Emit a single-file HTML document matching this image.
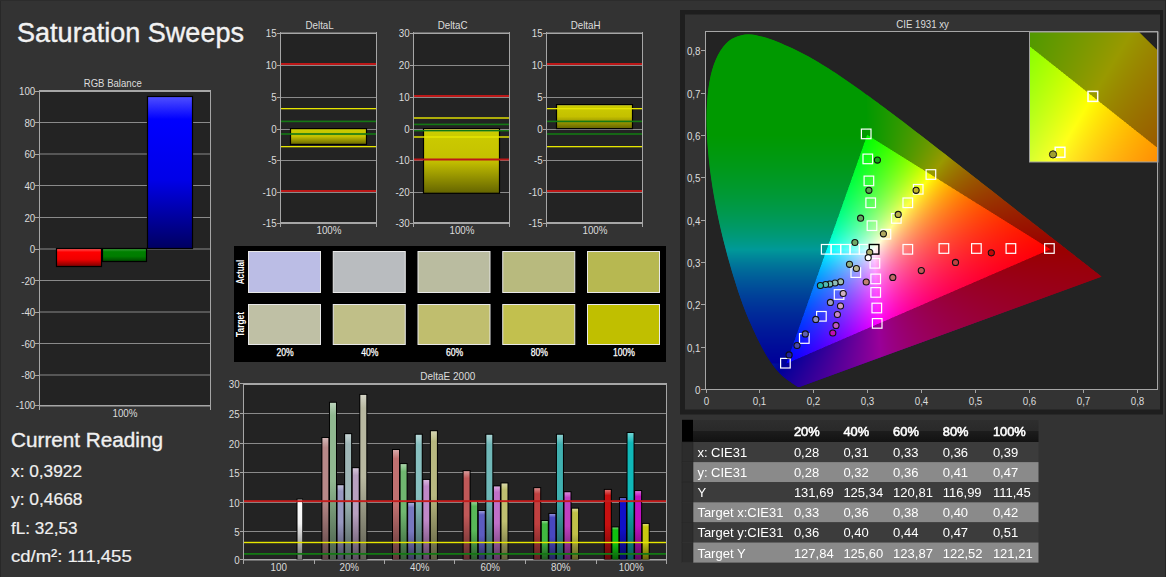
<!DOCTYPE html>
<html><head><meta charset="utf-8"><style>
html,body{margin:0;padding:0;background:#333;overflow:hidden}
#wrap{position:relative;width:1166px;height:577px;overflow:hidden}
svg{position:absolute;left:0;top:0;font-family:"Liberation Sans", sans-serif}
canvas{position:absolute;left:0;top:0}
</style></head><body><div id="wrap">
<svg width="1166" height="577" viewBox="0 0 1166 577"><defs><linearGradient id="gR" x1="0" y1="0" x2="0" y2="1"><stop offset="0" stop-color="#ff6060"/><stop offset="0.2" stop-color="#ff0000"/><stop offset="0.6" stop-color="#f00000"/><stop offset="1" stop-color="#7a0000"/></linearGradient><linearGradient id="gG" x1="0" y1="0" x2="0" y2="1"><stop offset="0" stop-color="#40a040"/><stop offset="0.25" stop-color="#008000"/><stop offset="0.6" stop-color="#007c00"/><stop offset="1" stop-color="#004400"/></linearGradient><linearGradient id="gB" x1="0" y1="0" x2="0" y2="1"><stop offset="0" stop-color="#5050ff"/><stop offset="0.15" stop-color="#0000ff"/><stop offset="0.55" stop-color="#0000e8"/><stop offset="1" stop-color="#000060"/></linearGradient><linearGradient id="gY" x1="0" y1="0" x2="0" y2="1"><stop offset="0" stop-color="#dede60"/><stop offset="0.06" stop-color="#cccc00"/><stop offset="0.5" stop-color="#c4c000"/><stop offset="1" stop-color="#646400"/></linearGradient><linearGradient id="gE00" x1="0" y1="0" x2="0" y2="1"><stop offset="0" stop-color="#d4b7b7"/><stop offset="0.08" stop-color="#b88888"/><stop offset="0.5" stop-color="#b88888"/><stop offset="1" stop-color="#5c4444"/></linearGradient><linearGradient id="gE01" x1="0" y1="0" x2="0" y2="1"><stop offset="0" stop-color="#bcd4bc"/><stop offset="0.08" stop-color="#90b890"/><stop offset="0.5" stop-color="#90b890"/><stop offset="1" stop-color="#485c48"/></linearGradient><linearGradient id="gE02" x1="0" y1="0" x2="0" y2="1"><stop offset="0" stop-color="#c1c1d9"/><stop offset="0.08" stop-color="#9898c0"/><stop offset="0.5" stop-color="#9898c0"/><stop offset="1" stop-color="#4c4c60"/></linearGradient><linearGradient id="gE03" x1="0" y1="0" x2="0" y2="1"><stop offset="0" stop-color="#c6d4d4"/><stop offset="0.08" stop-color="#a0b8b8"/><stop offset="0.5" stop-color="#a0b8b8"/><stop offset="1" stop-color="#505c5c"/></linearGradient><linearGradient id="gE04" x1="0" y1="0" x2="0" y2="1"><stop offset="0" stop-color="#d4c6d9"/><stop offset="0.08" stop-color="#b8a0c0"/><stop offset="0.5" stop-color="#b8a0c0"/><stop offset="1" stop-color="#5c5060"/></linearGradient><linearGradient id="gE05" x1="0" y1="0" x2="0" y2="1"><stop offset="0" stop-color="#d4d4c6"/><stop offset="0.08" stop-color="#b8b8a0"/><stop offset="0.5" stop-color="#b8b8a0"/><stop offset="1" stop-color="#5c5c50"/></linearGradient><linearGradient id="gE10" x1="0" y1="0" x2="0" y2="1"><stop offset="0" stop-color="#d9a9a9"/><stop offset="0.08" stop-color="#c07070"/><stop offset="0.5" stop-color="#c07070"/><stop offset="1" stop-color="#603838"/></linearGradient><linearGradient id="gE11" x1="0" y1="0" x2="0" y2="1"><stop offset="0" stop-color="#a9d4a9"/><stop offset="0.08" stop-color="#70b870"/><stop offset="0.5" stop-color="#70b870"/><stop offset="1" stop-color="#385c38"/></linearGradient><linearGradient id="gE12" x1="0" y1="0" x2="0" y2="1"><stop offset="0" stop-color="#aeaed9"/><stop offset="0.08" stop-color="#7878c0"/><stop offset="0.5" stop-color="#7878c0"/><stop offset="1" stop-color="#3c3c60"/></linearGradient><linearGradient id="gE13" x1="0" y1="0" x2="0" y2="1"><stop offset="0" stop-color="#b7d9d9"/><stop offset="0.08" stop-color="#88c0c0"/><stop offset="0.5" stop-color="#88c0c0"/><stop offset="1" stop-color="#446060"/></linearGradient><linearGradient id="gE14" x1="0" y1="0" x2="0" y2="1"><stop offset="0" stop-color="#d9b7de"/><stop offset="0.08" stop-color="#c088c8"/><stop offset="0.5" stop-color="#c088c8"/><stop offset="1" stop-color="#604464"/></linearGradient><linearGradient id="gE15" x1="0" y1="0" x2="0" y2="1"><stop offset="0" stop-color="#d4d4b2"/><stop offset="0.08" stop-color="#b8b880"/><stop offset="0.5" stop-color="#b8b880"/><stop offset="1" stop-color="#5c5c40"/></linearGradient><linearGradient id="gE20" x1="0" y1="0" x2="0" y2="1"><stop offset="0" stop-color="#d99a9a"/><stop offset="0.08" stop-color="#c05858"/><stop offset="0.5" stop-color="#c05858"/><stop offset="1" stop-color="#602c2c"/></linearGradient><linearGradient id="gE21" x1="0" y1="0" x2="0" y2="1"><stop offset="0" stop-color="#9ad49a"/><stop offset="0.08" stop-color="#58b858"/><stop offset="0.5" stop-color="#58b858"/><stop offset="1" stop-color="#2c5c2c"/></linearGradient><linearGradient id="gE22" x1="0" y1="0" x2="0" y2="1"><stop offset="0" stop-color="#9d9dd9"/><stop offset="0.08" stop-color="#5c5cc0"/><stop offset="0.5" stop-color="#5c5cc0"/><stop offset="1" stop-color="#2e2e60"/></linearGradient><linearGradient id="gE23" x1="0" y1="0" x2="0" y2="1"><stop offset="0" stop-color="#a9d4d4"/><stop offset="0.08" stop-color="#70b8b8"/><stop offset="0.5" stop-color="#70b8b8"/><stop offset="1" stop-color="#385c5c"/></linearGradient><linearGradient id="gE24" x1="0" y1="0" x2="0" y2="1"><stop offset="0" stop-color="#d9a9de"/><stop offset="0.08" stop-color="#c070c8"/><stop offset="0.5" stop-color="#c070c8"/><stop offset="1" stop-color="#603864"/></linearGradient><linearGradient id="gE25" x1="0" y1="0" x2="0" y2="1"><stop offset="0" stop-color="#d9d9a9"/><stop offset="0.08" stop-color="#c0c070"/><stop offset="0.5" stop-color="#c0c070"/><stop offset="1" stop-color="#606038"/></linearGradient><linearGradient id="gE30" x1="0" y1="0" x2="0" y2="1"><stop offset="0" stop-color="#d98c8c"/><stop offset="0.08" stop-color="#c04040"/><stop offset="0.5" stop-color="#c04040"/><stop offset="1" stop-color="#602020"/></linearGradient><linearGradient id="gE31" x1="0" y1="0" x2="0" y2="1"><stop offset="0" stop-color="#8cd48c"/><stop offset="0.08" stop-color="#40b840"/><stop offset="0.5" stop-color="#40b840"/><stop offset="1" stop-color="#205c20"/></linearGradient><linearGradient id="gE32" x1="0" y1="0" x2="0" y2="1"><stop offset="0" stop-color="#9191d9"/><stop offset="0.08" stop-color="#4848c0"/><stop offset="0.5" stop-color="#4848c0"/><stop offset="1" stop-color="#242460"/></linearGradient><linearGradient id="gE33" x1="0" y1="0" x2="0" y2="1"><stop offset="0" stop-color="#8ccfcf"/><stop offset="0.08" stop-color="#40b0b0"/><stop offset="0.5" stop-color="#40b0b0"/><stop offset="1" stop-color="#205858"/></linearGradient><linearGradient id="gE34" x1="0" y1="0" x2="0" y2="1"><stop offset="0" stop-color="#d98cd9"/><stop offset="0.08" stop-color="#c040c0"/><stop offset="0.5" stop-color="#c040c0"/><stop offset="1" stop-color="#602060"/></linearGradient><linearGradient id="gE35" x1="0" y1="0" x2="0" y2="1"><stop offset="0" stop-color="#d9d991"/><stop offset="0.08" stop-color="#c0c048"/><stop offset="0.5" stop-color="#c0c048"/><stop offset="1" stop-color="#606024"/></linearGradient><linearGradient id="gE40" x1="0" y1="0" x2="0" y2="1"><stop offset="0" stop-color="#de6f6f"/><stop offset="0.08" stop-color="#c81010"/><stop offset="0.5" stop-color="#c81010"/><stop offset="1" stop-color="#640808"/></linearGradient><linearGradient id="gE41" x1="0" y1="0" x2="0" y2="1"><stop offset="0" stop-color="#6fd96f"/><stop offset="0.08" stop-color="#10c010"/><stop offset="0.5" stop-color="#10c010"/><stop offset="1" stop-color="#086008"/></linearGradient><linearGradient id="gE42" x1="0" y1="0" x2="0" y2="1"><stop offset="0" stop-color="#6f6fde"/><stop offset="0.08" stop-color="#1010c8"/><stop offset="0.5" stop-color="#1010c8"/><stop offset="1" stop-color="#080864"/></linearGradient><linearGradient id="gE43" x1="0" y1="0" x2="0" y2="1"><stop offset="0" stop-color="#6fd4d4"/><stop offset="0.08" stop-color="#10b8b8"/><stop offset="0.5" stop-color="#10b8b8"/><stop offset="1" stop-color="#085c5c"/></linearGradient><linearGradient id="gE44" x1="0" y1="0" x2="0" y2="1"><stop offset="0" stop-color="#d96fd9"/><stop offset="0.08" stop-color="#c010c0"/><stop offset="0.5" stop-color="#c010c0"/><stop offset="1" stop-color="#600860"/></linearGradient><linearGradient id="gE45" x1="0" y1="0" x2="0" y2="1"><stop offset="0" stop-color="#dede6f"/><stop offset="0.08" stop-color="#c8c810"/><stop offset="0.5" stop-color="#c8c810"/><stop offset="1" stop-color="#646408"/></linearGradient><linearGradient id="gEw" x1="0" y1="0" x2="0" y2="1"><stop offset="0" stop-color="#ffffff"/><stop offset="0.4" stop-color="#f4f4f4"/><stop offset="1" stop-color="#707070"/></linearGradient><linearGradient id="gTong" gradientUnits="userSpaceOnUse" x1="0" y1="134.9" x2="0" y2="363.6"><stop offset="0" stop-color="#009400"/><stop offset="0.35" stop-color="#009440"/><stop offset="0.5" stop-color="#009490"/><stop offset="0.7" stop-color="#004a94"/><stop offset="1" stop-color="#0000a0"/></linearGradient><linearGradient id="gOutR" gradientUnits="userSpaceOnUse" x1="867.2" y1="134.9" x2="1050.5" y2="249.2"><stop offset="0" stop-color="#009400"/><stop offset="0.35" stop-color="#7a8a00"/><stop offset="0.65" stop-color="#8a4000"/><stop offset="1" stop-color="#940000"/></linearGradient><linearGradient id="gOutB" gradientUnits="userSpaceOnUse" x1="786.4" y1="363.6" x2="1050.5" y2="249.2"><stop offset="0" stop-color="#1000a0"/><stop offset="0.45" stop-color="#7a0090"/><stop offset="1" stop-color="#940000"/></linearGradient><clipPath id="cpT"><polygon points="799.3,386.9 799.3,386.9 799.3,386.9 799.3,386.9 799.3,386.9 799.3,386.9 799.3,386.9 799.3,386.9 799.3,386.9 799.2,386.9 799.2,386.9 799.2,386.9 799.2,386.9 799.2,386.9 799.1,386.9 799.1,386.9 799.1,386.9 799.1,386.9 799.1,386.9 799.0,386.9 799.0,386.9 799.0,386.9 799.0,387.0 798.9,387.0 798.9,387.0 798.9,387.0 798.9,387.0 798.8,387.0 798.8,387.0 798.8,387.0 798.7,387.0 798.7,387.0 798.7,387.0 798.6,387.0 798.6,387.0 798.6,387.0 798.5,387.0 798.5,387.0 798.4,387.0 798.4,387.0 798.4,387.0 798.3,387.0 798.3,387.0 798.2,387.0 798.2,386.9 798.1,386.9 798.0,386.9 798.0,386.9 797.9,386.8 797.8,386.8 797.7,386.8 797.6,386.7 797.5,386.7 797.4,386.6 797.3,386.5 797.2,386.5 797.1,386.4 796.9,386.3 796.8,386.3 796.7,386.2 796.5,386.1 796.4,386.0 796.2,385.9 796.0,385.7 795.9,385.6 795.7,385.5 795.5,385.4 795.3,385.2 795.0,385.1 794.8,384.9 794.6,384.7 794.4,384.6 794.1,384.4 793.8,384.2 793.6,384.0 793.3,383.8 793.0,383.6 792.7,383.4 792.3,383.2 792.0,382.9 791.6,382.7 791.2,382.4 790.8,382.1 790.4,381.8 789.9,381.5 789.4,381.2 789.0,380.9 788.5,380.5 788.0,380.2 787.4,379.8 786.9,379.4 786.3,379.0 785.7,378.5 785.1,378.0 784.5,377.5 783.8,377.0 783.1,376.4 782.4,375.8 781.7,375.2 781.0,374.6 780.2,373.8 779.4,373.0 778.5,372.1 777.6,371.1 776.7,370.0 775.7,368.8 774.6,367.5 773.5,366.1 772.4,364.5 771.2,362.8 770.0,361.0 768.7,359.1 767.4,357.0 766.0,354.8 764.6,352.2 763.1,349.5 761.5,346.6 759.9,343.6 758.2,340.2 756.5,336.7 754.7,332.8 752.8,328.7 750.8,324.3 748.8,319.7 746.7,314.8 744.6,309.6 742.5,304.0 740.4,298.1 738.3,291.9 736.2,285.4 734.1,278.5 731.9,271.4 729.8,264.1 727.6,256.4 725.5,248.3 723.3,239.9 721.3,231.4 719.3,222.7 717.4,214.0 715.7,205.3 714.0,196.3 712.5,187.2 711.1,178.1 709.9,169.2 708.9,160.5 708.1,151.9 707.4,143.3 706.9,134.9 706.6,126.6 706.5,118.6 706.6,110.9 707.0,103.4 707.5,96.1 708.3,89.1 709.3,82.4 710.6,76.1 712.0,70.2 713.7,64.8 715.7,59.8 717.9,55.1 720.3,50.9 722.9,47.1 725.6,43.9 728.4,41.2 731.5,39.1 734.7,37.4 738.0,36.1 741.4,35.2 744.8,34.6 748.2,34.4 751.8,34.6 755.4,35.1 759.1,35.9 762.8,36.8 766.4,37.8 770.1,38.9 773.8,40.3 777.4,41.7 781.1,43.3 784.8,44.9 788.4,46.5 791.9,48.1 795.4,49.8 798.9,51.5 802.3,53.2 805.7,55.0 809.1,56.8 812.5,58.7 815.8,60.6 819.1,62.6 822.5,64.7 825.8,66.7 829.1,68.8 832.4,70.9 835.7,73.1 838.9,75.2 842.2,77.4 845.5,79.7 848.7,81.9 852.0,84.2 855.2,86.5 858.4,88.8 861.6,91.1 864.8,93.5 868.1,95.8 871.3,98.1 874.5,100.5 877.7,102.8 880.9,105.2 884.1,107.6 887.3,110.0 890.5,112.4 893.7,114.8 897.0,117.2 900.2,119.6 903.4,122.1 906.6,124.5 909.8,127.0 913.0,129.4 916.2,131.9 919.4,134.4 922.6,136.8 925.8,139.3 929.0,141.8 932.2,144.2 935.4,146.7 938.5,149.2 941.7,151.6 944.9,154.1 948.0,156.5 951.2,159.0 954.3,161.4 957.4,163.9 960.5,166.3 963.6,168.7 966.6,171.1 969.7,173.5 972.7,175.9 975.8,178.2 978.8,180.6 981.7,182.9 984.7,185.2 987.6,187.5 990.6,189.8 993.4,192.1 996.3,194.3 999.1,196.6 1002.0,198.8 1004.7,200.9 1007.5,203.1 1010.2,205.2 1012.9,207.3 1015.5,209.4 1018.1,211.4 1020.7,213.4 1023.2,215.4 1025.7,217.3 1028.1,219.2 1030.5,221.1 1032.8,222.9 1035.0,224.6 1037.2,226.3 1039.3,228.0 1041.4,229.6 1043.5,231.2 1045.5,232.8 1047.4,234.4 1049.4,235.9 1051.3,237.4 1053.1,238.8 1054.9,240.2 1056.6,241.5 1058.3,242.8 1059.9,244.0 1061.4,245.2 1062.9,246.4 1064.4,247.6 1065.8,248.7 1067.1,249.7 1068.4,250.7 1069.7,251.7 1070.9,252.7 1072.1,253.6 1073.2,254.5 1074.3,255.3 1075.3,256.2 1076.3,256.9 1077.3,257.7 1078.2,258.4 1079.1,259.1 1080.0,259.8 1080.8,260.4 1081.6,261.1 1082.4,261.7 1083.1,262.2 1083.8,262.8 1084.5,263.3 1085.2,263.9 1085.8,264.4 1086.5,264.9 1087.1,265.3 1087.7,265.8 1088.2,266.3 1088.8,266.7 1089.3,267.1 1089.8,267.5 1090.3,267.9 1090.8,268.3 1091.3,268.7 1091.8,269.0 1092.2,269.4 1092.6,269.7 1093.0,270.0 1093.4,270.3 1093.8,270.6 1094.2,270.9 1094.5,271.2 1094.9,271.4 1095.2,271.7 1095.5,271.9 1095.8,272.2 1096.1,272.4 1096.3,272.6 1096.6,272.8 1096.8,273.0 1097.0,273.1 1097.3,273.3 1097.5,273.5 1097.7,273.6 1097.9,273.8 1098.1,273.9 1098.2,274.1 1098.4,274.2 1098.6,274.3 1098.7,274.4 1098.8,274.6 1099.0,274.7 1099.1,274.7 1099.2,274.8 1099.3,274.9 1099.4,275.0 1099.5,275.1 1099.6,275.1 1099.6,275.2 1099.7,275.2 1099.8,275.3 1099.9,275.4 1100.0,275.4 1100.0,275.5 1100.2,275.6 1100.3,275.7 1100.4,275.8 1100.5,275.9 1100.7,276.0 1100.8,276.1 1100.9,276.2 1101.1,276.3 1101.2,276.4 1101.3,276.5 1101.4,276.6 1101.5,276.6"/></clipPath><radialGradient id="gW" gradientUnits="userSpaceOnUse" cx="874.0" cy="249.7" r="70"><stop offset="0" stop-color="#ffffff"/><stop offset="0.4" stop-color="#ffffff" stop-opacity="0.5"/><stop offset="1" stop-color="#ffffff" stop-opacity="0"/></radialGradient><linearGradient id="gV0" gradientUnits="userSpaceOnUse" x1="1050.5" y1="249.2" x2="826.8" y2="249.2"><stop offset="0" stop-color="#ff0000"/><stop offset="0.55" stop-color="#ff0000"/><stop offset="1" stop-color="#000"/></linearGradient><linearGradient id="gV1" gradientUnits="userSpaceOnUse" x1="867.2" y1="134.9" x2="918.4" y2="306.4"><stop offset="0" stop-color="#00ff00"/><stop offset="0.55" stop-color="#00ff00"/><stop offset="1" stop-color="#000"/></linearGradient><linearGradient id="gV2" gradientUnits="userSpaceOnUse" x1="786.4" y1="363.6" x2="958.8" y2="192.1"><stop offset="0" stop-color="#0000ff"/><stop offset="0.55" stop-color="#0000ff"/><stop offset="1" stop-color="#000"/></linearGradient><linearGradient id="gIn1" x1="0" y1="0" x2="1" y2="1"><stop offset="0" stop-color="#80ff00"/><stop offset="0.5" stop-color="#ffff00"/><stop offset="1" stop-color="#ff9000"/></linearGradient><linearGradient id="gIn2" x1="0" y1="0" x2="1" y2="1"><stop offset="0" stop-color="#488c00"/><stop offset="0.5" stop-color="#8a8a00"/><stop offset="1" stop-color="#8a5000"/></linearGradient><linearGradient id="gHdr" x1="0" y1="0" x2="0" y2="1"><stop offset="0" stop-color="#2e2e2e"/><stop offset="0.5" stop-color="#292929"/><stop offset="0.52" stop-color="#1c1c1c"/><stop offset="1" stop-color="#121212"/></linearGradient></defs>
<rect x="0" y="0" width="1166" height="577" fill="#333333"/>
<rect x="0" y="0" width="1" height="577" fill="#282828"/>
<rect x="0" y="0" width="1166" height="1" fill="#2c2c2c"/>
<rect x="1165" y="0" width="1" height="577" fill="#262626"/>
<text x="17" y="41.6" font-size="27" text-anchor="start" fill="#f2f2f2" font-weight="normal" stroke="#f2f2f2" stroke-width="0.4" textLength="227" lengthAdjust="spacingAndGlyphs">Saturation Sweeps</text>
<rect x="40" y="91" width="170" height="315" fill="#232323"/>
<rect x="40" y="90" width="171" height="2" fill="#a6a6a6"/>
<rect x="35" y="91" width="4" height="1" fill="#a6a6a6"/>
<text x="35.3" y="95" font-size="11" text-anchor="end" fill="#dcdcdc" font-weight="normal"  textLength="16.33" lengthAdjust="spacingAndGlyphs">100</text>
<rect x="40" y="122" width="170" height="1" fill="#8a8a8a"/>
<rect x="35" y="122" width="4" height="1" fill="#a6a6a6"/>
<text x="35.3" y="126.5" font-size="11" text-anchor="end" fill="#dcdcdc" font-weight="normal"  textLength="10.89" lengthAdjust="spacingAndGlyphs">80</text>
<rect x="40" y="153.5" width="170" height="1" fill="#8a8a8a"/>
<rect x="35" y="154" width="4" height="1" fill="#a6a6a6"/>
<text x="35.3" y="158" font-size="11" text-anchor="end" fill="#dcdcdc" font-weight="normal"  textLength="10.89" lengthAdjust="spacingAndGlyphs">60</text>
<rect x="40" y="185" width="170" height="1" fill="#8a8a8a"/>
<rect x="35" y="185" width="4" height="1" fill="#a6a6a6"/>
<text x="35.3" y="189.5" font-size="11" text-anchor="end" fill="#dcdcdc" font-weight="normal"  textLength="10.89" lengthAdjust="spacingAndGlyphs">40</text>
<rect x="40" y="217" width="170" height="1" fill="#8a8a8a"/>
<rect x="35" y="217" width="4" height="1" fill="#a6a6a6"/>
<text x="35.3" y="221.5" font-size="11" text-anchor="end" fill="#dcdcdc" font-weight="normal"  textLength="10.89" lengthAdjust="spacingAndGlyphs">20</text>
<rect x="40" y="248.5" width="170" height="1" fill="#8a8a8a"/>
<rect x="35" y="249" width="4" height="1" fill="#a6a6a6"/>
<text x="35.3" y="253" font-size="11" text-anchor="end" fill="#dcdcdc" font-weight="normal"  textLength="5.44" lengthAdjust="spacingAndGlyphs">0</text>
<rect x="40" y="280" width="170" height="1" fill="#8a8a8a"/>
<rect x="35" y="280" width="4" height="1" fill="#a6a6a6"/>
<text x="35.3" y="284.5" font-size="11" text-anchor="end" fill="#dcdcdc" font-weight="normal"  textLength="14.15" lengthAdjust="spacingAndGlyphs">-20</text>
<rect x="40" y="311.5" width="170" height="1" fill="#8a8a8a"/>
<rect x="35" y="312" width="4" height="1" fill="#a6a6a6"/>
<text x="35.3" y="316" font-size="11" text-anchor="end" fill="#dcdcdc" font-weight="normal"  textLength="14.15" lengthAdjust="spacingAndGlyphs">-40</text>
<rect x="40" y="343" width="170" height="1" fill="#8a8a8a"/>
<rect x="35" y="343" width="4" height="1" fill="#a6a6a6"/>
<text x="35.3" y="347.5" font-size="11" text-anchor="end" fill="#dcdcdc" font-weight="normal"  textLength="14.15" lengthAdjust="spacingAndGlyphs">-60</text>
<rect x="40" y="374.5" width="170" height="1" fill="#8a8a8a"/>
<rect x="35" y="375" width="4" height="1" fill="#a6a6a6"/>
<text x="35.3" y="379" font-size="11" text-anchor="end" fill="#dcdcdc" font-weight="normal"  textLength="14.15" lengthAdjust="spacingAndGlyphs">-80</text>
<rect x="39" y="405" width="172" height="1.5" fill="#a6a6a6"/>
<rect x="35" y="405" width="4" height="1" fill="#a6a6a6"/>
<text x="35.3" y="409" font-size="11" text-anchor="end" fill="#dcdcdc" font-weight="normal"  textLength="19.60" lengthAdjust="spacingAndGlyphs">-100</text>
<rect x="39" y="90" width="1" height="320" fill="#a6a6a6"/>
<rect x="210" y="90" width="1" height="320" fill="#a6a6a6"/>
<text x="112.75" y="87" font-size="11" text-anchor="middle" fill="#dcdcdc" font-weight="normal"  textLength="58.00" lengthAdjust="spacingAndGlyphs">RGB Balance</text>
<text x="125" y="417" font-size="11" text-anchor="middle" fill="#dcdcdc" font-weight="normal"  textLength="25.04" lengthAdjust="spacingAndGlyphs">100%</text>
<rect x="56.5" y="248.5" width="45" height="18" fill="url(#gR)" stroke="#000" stroke-width="1.2"/>
<rect x="102.5" y="248.5" width="44" height="13" fill="url(#gG)" stroke="#000" stroke-width="1.2"/>
<rect x="147.5" y="96.5" width="45" height="152" fill="url(#gB)" stroke="#000" stroke-width="1.2"/>
<rect x="281" y="33" width="95" height="190" fill="#232323"/>
<rect x="280" y="32.5" width="97" height="1.5" fill="#a6a6a6"/>
<rect x="277" y="33" width="3" height="1" fill="#a6a6a6"/>
<text x="276.7" y="36.8" font-size="11" text-anchor="end" fill="#dcdcdc" font-weight="normal"  textLength="10.89" lengthAdjust="spacingAndGlyphs">15</text>
<rect x="281" y="65" width="95" height="1" fill="#8a8a8a"/>
<rect x="277" y="65" width="3" height="1" fill="#a6a6a6"/>
<text x="276.7" y="68.8" font-size="11" text-anchor="end" fill="#dcdcdc" font-weight="normal"  textLength="10.89" lengthAdjust="spacingAndGlyphs">10</text>
<rect x="281" y="97" width="95" height="1" fill="#8a8a8a"/>
<rect x="277" y="97" width="3" height="1" fill="#a6a6a6"/>
<text x="276.7" y="100.8" font-size="11" text-anchor="end" fill="#dcdcdc" font-weight="normal"  textLength="5.44" lengthAdjust="spacingAndGlyphs">5</text>
<rect x="281" y="129" width="95" height="1" fill="#8a8a8a"/>
<rect x="277" y="129" width="3" height="1" fill="#a6a6a6"/>
<text x="276.7" y="132.8" font-size="11" text-anchor="end" fill="#dcdcdc" font-weight="normal"  textLength="5.44" lengthAdjust="spacingAndGlyphs">0</text>
<rect x="281" y="160" width="95" height="1" fill="#8a8a8a"/>
<rect x="277" y="160" width="3" height="1" fill="#a6a6a6"/>
<text x="276.7" y="163.8" font-size="11" text-anchor="end" fill="#dcdcdc" font-weight="normal"  textLength="8.71" lengthAdjust="spacingAndGlyphs">-5</text>
<rect x="281" y="192" width="95" height="1" fill="#8a8a8a"/>
<rect x="277" y="192" width="3" height="1" fill="#a6a6a6"/>
<text x="276.7" y="195.8" font-size="11" text-anchor="end" fill="#dcdcdc" font-weight="normal"  textLength="14.15" lengthAdjust="spacingAndGlyphs">-10</text>
<rect x="280" y="222" width="97" height="2" fill="#a6a6a6"/>
<rect x="277" y="223" width="3" height="1" fill="#a6a6a6"/>
<text x="276.7" y="226.8" font-size="11" text-anchor="end" fill="#dcdcdc" font-weight="normal"  textLength="14.15" lengthAdjust="spacingAndGlyphs">-15</text>
<rect x="280" y="32" width="1" height="195" fill="#a6a6a6"/>
<rect x="376" y="32" width="1" height="195" fill="#a6a6a6"/>
<text x="319.6" y="29" font-size="11" text-anchor="middle" fill="#dcdcdc" font-weight="normal"  textLength="28.30" lengthAdjust="spacingAndGlyphs">DeltaL</text>
<text x="329" y="233.7" font-size="11" text-anchor="middle" fill="#dcdcdc" font-weight="normal"  textLength="25.04" lengthAdjust="spacingAndGlyphs">100%</text>
<rect x="290.5" y="128.6" width="76" height="15.8" fill="url(#gY)" stroke="#000" stroke-width="1.2"/>
<rect x="281" y="63" width="95" height="2" fill="#bc1818"/>
<rect x="281" y="190" width="95" height="2" fill="#bc1818"/>
<rect x="281" y="108" width="95" height="1.3" fill="#e6e600"/>
<rect x="281" y="146" width="95" height="1.3" fill="#e6e600"/>
<rect x="281" y="120.6" width="95" height="1.6" fill="#147814"/>
<rect x="281" y="133.2" width="95" height="1.6" fill="#147814"/>
<rect x="414" y="33" width="95" height="190" fill="#232323"/>
<rect x="413" y="32.5" width="97" height="1.5" fill="#a6a6a6"/>
<rect x="410" y="33" width="3" height="1" fill="#a6a6a6"/>
<text x="409.7" y="36.8" font-size="11" text-anchor="end" fill="#dcdcdc" font-weight="normal"  textLength="10.89" lengthAdjust="spacingAndGlyphs">30</text>
<rect x="414" y="65" width="95" height="1" fill="#8a8a8a"/>
<rect x="410" y="65" width="3" height="1" fill="#a6a6a6"/>
<text x="409.7" y="68.8" font-size="11" text-anchor="end" fill="#dcdcdc" font-weight="normal"  textLength="10.89" lengthAdjust="spacingAndGlyphs">20</text>
<rect x="414" y="97" width="95" height="1" fill="#8a8a8a"/>
<rect x="410" y="97" width="3" height="1" fill="#a6a6a6"/>
<text x="409.7" y="100.8" font-size="11" text-anchor="end" fill="#dcdcdc" font-weight="normal"  textLength="10.89" lengthAdjust="spacingAndGlyphs">10</text>
<rect x="414" y="129" width="95" height="1" fill="#8a8a8a"/>
<rect x="410" y="129" width="3" height="1" fill="#a6a6a6"/>
<text x="409.7" y="132.8" font-size="11" text-anchor="end" fill="#dcdcdc" font-weight="normal"  textLength="5.44" lengthAdjust="spacingAndGlyphs">0</text>
<rect x="414" y="160" width="95" height="1" fill="#8a8a8a"/>
<rect x="410" y="160" width="3" height="1" fill="#a6a6a6"/>
<text x="409.7" y="163.8" font-size="11" text-anchor="end" fill="#dcdcdc" font-weight="normal"  textLength="14.15" lengthAdjust="spacingAndGlyphs">-10</text>
<rect x="414" y="192" width="95" height="1" fill="#8a8a8a"/>
<rect x="410" y="192" width="3" height="1" fill="#a6a6a6"/>
<text x="409.7" y="195.8" font-size="11" text-anchor="end" fill="#dcdcdc" font-weight="normal"  textLength="14.15" lengthAdjust="spacingAndGlyphs">-20</text>
<rect x="413" y="222" width="97" height="2" fill="#a6a6a6"/>
<rect x="410" y="223" width="3" height="1" fill="#a6a6a6"/>
<text x="409.7" y="226.8" font-size="11" text-anchor="end" fill="#dcdcdc" font-weight="normal"  textLength="14.15" lengthAdjust="spacingAndGlyphs">-30</text>
<rect x="413" y="32" width="1" height="195" fill="#a6a6a6"/>
<rect x="509" y="32" width="1" height="195" fill="#a6a6a6"/>
<text x="452.6" y="29" font-size="11" text-anchor="middle" fill="#dcdcdc" font-weight="normal"  textLength="29.93" lengthAdjust="spacingAndGlyphs">DeltaC</text>
<text x="462" y="233.7" font-size="11" text-anchor="middle" fill="#dcdcdc" font-weight="normal"  textLength="25.04" lengthAdjust="spacingAndGlyphs">100%</text>
<rect x="423.5" y="128.6" width="76" height="64.7" fill="url(#gY)" stroke="#000" stroke-width="1.2"/>
<rect x="414" y="95" width="95" height="2" fill="#bc1818"/>
<rect x="414" y="158.5" width="95" height="2" fill="#bc1818"/>
<rect x="414" y="117" width="95" height="2" fill="rgba(232,232,0,0.7)"/>
<rect x="414" y="136" width="95" height="2" fill="rgba(232,232,0,0.7)"/>
<rect x="414" y="123.6" width="95" height="1.6" fill="#147814"/>
<rect x="414" y="130" width="95" height="1.4" fill="#147814"/>
<rect x="547" y="33" width="95" height="190" fill="#232323"/>
<rect x="546" y="32.5" width="97" height="1.5" fill="#a6a6a6"/>
<rect x="543" y="33" width="3" height="1" fill="#a6a6a6"/>
<text x="542.7" y="36.8" font-size="11" text-anchor="end" fill="#dcdcdc" font-weight="normal"  textLength="10.89" lengthAdjust="spacingAndGlyphs">15</text>
<rect x="547" y="65" width="95" height="1" fill="#8a8a8a"/>
<rect x="543" y="65" width="3" height="1" fill="#a6a6a6"/>
<text x="542.7" y="68.8" font-size="11" text-anchor="end" fill="#dcdcdc" font-weight="normal"  textLength="10.89" lengthAdjust="spacingAndGlyphs">10</text>
<rect x="547" y="97" width="95" height="1" fill="#8a8a8a"/>
<rect x="543" y="97" width="3" height="1" fill="#a6a6a6"/>
<text x="542.7" y="100.8" font-size="11" text-anchor="end" fill="#dcdcdc" font-weight="normal"  textLength="5.44" lengthAdjust="spacingAndGlyphs">5</text>
<rect x="547" y="129" width="95" height="1" fill="#8a8a8a"/>
<rect x="543" y="129" width="3" height="1" fill="#a6a6a6"/>
<text x="542.7" y="132.8" font-size="11" text-anchor="end" fill="#dcdcdc" font-weight="normal"  textLength="5.44" lengthAdjust="spacingAndGlyphs">0</text>
<rect x="547" y="160" width="95" height="1" fill="#8a8a8a"/>
<rect x="543" y="160" width="3" height="1" fill="#a6a6a6"/>
<text x="542.7" y="163.8" font-size="11" text-anchor="end" fill="#dcdcdc" font-weight="normal"  textLength="8.71" lengthAdjust="spacingAndGlyphs">-5</text>
<rect x="547" y="192" width="95" height="1" fill="#8a8a8a"/>
<rect x="543" y="192" width="3" height="1" fill="#a6a6a6"/>
<text x="542.7" y="195.8" font-size="11" text-anchor="end" fill="#dcdcdc" font-weight="normal"  textLength="14.15" lengthAdjust="spacingAndGlyphs">-10</text>
<rect x="546" y="222" width="97" height="2" fill="#a6a6a6"/>
<rect x="543" y="223" width="3" height="1" fill="#a6a6a6"/>
<text x="542.7" y="226.8" font-size="11" text-anchor="end" fill="#dcdcdc" font-weight="normal"  textLength="14.15" lengthAdjust="spacingAndGlyphs">-15</text>
<rect x="546" y="32" width="1" height="195" fill="#a6a6a6"/>
<rect x="642" y="32" width="1" height="195" fill="#a6a6a6"/>
<text x="585.6" y="29" font-size="11" text-anchor="middle" fill="#dcdcdc" font-weight="normal"  textLength="29.93" lengthAdjust="spacingAndGlyphs">DeltaH</text>
<text x="595" y="233.7" font-size="11" text-anchor="middle" fill="#dcdcdc" font-weight="normal"  textLength="25.04" lengthAdjust="spacingAndGlyphs">100%</text>
<rect x="556.5" y="104.6" width="76" height="24" fill="url(#gY)" stroke="#000" stroke-width="1.2"/>
<rect x="547" y="63" width="95" height="2" fill="#bc1818"/>
<rect x="547" y="190" width="95" height="2" fill="#bc1818"/>
<rect x="547" y="108" width="95" height="1.3" fill="#e6e600"/>
<rect x="547" y="146" width="95" height="1.3" fill="#e6e600"/>
<rect x="547" y="120.6" width="95" height="1.6" fill="#147814"/>
<rect x="547" y="133.2" width="95" height="1.6" fill="#147814"/>
<rect x="234" y="246" width="432" height="116" fill="#000"/>
<rect x="248.5" y="251.5" width="72" height="41" fill="#bbbde5" stroke="#e8e8e8" stroke-width="1"/>
<rect x="248.5" y="304.5" width="72" height="40" fill="#bfc0a5" stroke="#e8e8e8" stroke-width="1"/>
<text x="285" y="356" font-size="10" text-anchor="middle" fill="#ffffff" font-weight="normal" stroke="#ffffff" stroke-width="0.25" textLength="17.21" lengthAdjust="spacingAndGlyphs">20%</text>
<rect x="333.25" y="251.5" width="72" height="41" fill="#b9bcbf" stroke="#e8e8e8" stroke-width="1"/>
<rect x="333.25" y="304.5" width="72" height="40" fill="#c0bf88" stroke="#e8e8e8" stroke-width="1"/>
<text x="369.75" y="356" font-size="10" text-anchor="middle" fill="#ffffff" font-weight="normal" stroke="#ffffff" stroke-width="0.25" textLength="17.21" lengthAdjust="spacingAndGlyphs">40%</text>
<rect x="418" y="251.5" width="72" height="41" fill="#babca0" stroke="#e8e8e8" stroke-width="1"/>
<rect x="418" y="304.5" width="72" height="40" fill="#c0be6e" stroke="#e8e8e8" stroke-width="1"/>
<text x="454.5" y="356" font-size="10" text-anchor="middle" fill="#ffffff" font-weight="normal" stroke="#ffffff" stroke-width="0.25" textLength="17.21" lengthAdjust="spacingAndGlyphs">60%</text>
<rect x="502.75" y="251.5" width="72" height="41" fill="#b8ba7e" stroke="#e8e8e8" stroke-width="1"/>
<rect x="502.75" y="304.5" width="72" height="40" fill="#c2c04e" stroke="#e8e8e8" stroke-width="1"/>
<text x="539.25" y="356" font-size="10" text-anchor="middle" fill="#ffffff" font-weight="normal" stroke="#ffffff" stroke-width="0.25" textLength="17.21" lengthAdjust="spacingAndGlyphs">80%</text>
<rect x="587.5" y="251.5" width="72" height="41" fill="#b7b851" stroke="#e8e8e8" stroke-width="1"/>
<rect x="587.5" y="304.5" width="72" height="40" fill="#c0bf00" stroke="#e8e8e8" stroke-width="1"/>
<text x="624" y="356" font-size="10" text-anchor="middle" fill="#ffffff" font-weight="normal" stroke="#ffffff" stroke-width="0.25" textLength="22.00" lengthAdjust="spacingAndGlyphs">100%</text>
<text x="0" y="0" font-size="10" font-weight="bold" fill="#fff" text-anchor="middle" textLength="24.5" lengthAdjust="spacingAndGlyphs" transform="translate(243.5 272) rotate(-90)">Actual</text>
<text x="0" y="0" font-size="10" font-weight="bold" fill="#fff" text-anchor="middle" textLength="25" lengthAdjust="spacingAndGlyphs" transform="translate(243.5 324.5) rotate(-90)">Target</text>
<rect x="244" y="384" width="422" height="176" fill="#232323"/>
<rect x="243" y="383" width="424" height="2" fill="#a6a6a6"/>
<rect x="240" y="383" width="3" height="1" fill="#a6a6a6"/>
<text x="239.7" y="387.7" font-size="11" text-anchor="end" fill="#dcdcdc" font-weight="normal"  textLength="10.89" lengthAdjust="spacingAndGlyphs">30</text>
<rect x="244" y="413" width="422" height="1" fill="#8a8a8a"/>
<rect x="240" y="413" width="3" height="1" fill="#a6a6a6"/>
<text x="239.7" y="417.7" font-size="11" text-anchor="end" fill="#dcdcdc" font-weight="normal"  textLength="10.89" lengthAdjust="spacingAndGlyphs">25</text>
<rect x="244" y="443" width="422" height="1" fill="#8a8a8a"/>
<rect x="240" y="443" width="3" height="1" fill="#a6a6a6"/>
<text x="239.7" y="447.7" font-size="11" text-anchor="end" fill="#dcdcdc" font-weight="normal"  textLength="10.89" lengthAdjust="spacingAndGlyphs">20</text>
<rect x="244" y="472" width="422" height="1" fill="#8a8a8a"/>
<rect x="240" y="472" width="3" height="1" fill="#a6a6a6"/>
<text x="239.7" y="476.7" font-size="11" text-anchor="end" fill="#dcdcdc" font-weight="normal"  textLength="10.89" lengthAdjust="spacingAndGlyphs">15</text>
<rect x="244" y="502" width="422" height="1" fill="#8a8a8a"/>
<rect x="240" y="502" width="3" height="1" fill="#a6a6a6"/>
<text x="239.7" y="506.7" font-size="11" text-anchor="end" fill="#dcdcdc" font-weight="normal"  textLength="10.89" lengthAdjust="spacingAndGlyphs">10</text>
<rect x="244" y="531" width="422" height="1" fill="#8a8a8a"/>
<rect x="240" y="531" width="3" height="1" fill="#a6a6a6"/>
<text x="239.7" y="535.7" font-size="11" text-anchor="end" fill="#dcdcdc" font-weight="normal"  textLength="5.44" lengthAdjust="spacingAndGlyphs">5</text>
<rect x="243" y="559" width="424" height="1.5" fill="#a6a6a6"/>
<rect x="240" y="559" width="3" height="1" fill="#a6a6a6"/>
<text x="239.7" y="563.7" font-size="11" text-anchor="end" fill="#dcdcdc" font-weight="normal"  textLength="5.44" lengthAdjust="spacingAndGlyphs">0</text>
<rect x="243" y="383" width="1" height="181" fill="#a6a6a6"/>
<rect x="666" y="383" width="1" height="181" fill="#a6a6a6"/>
<rect x="314" y="559" width="1" height="5" fill="#a6a6a6"/>
<rect x="384" y="559" width="1" height="5" fill="#a6a6a6"/>
<rect x="454" y="559" width="1" height="5" fill="#a6a6a6"/>
<rect x="525" y="559" width="1" height="5" fill="#a6a6a6"/>
<rect x="596" y="559" width="1" height="5" fill="#a6a6a6"/>
<text x="278.75" y="571" font-size="11" text-anchor="middle" fill="#dcdcdc" font-weight="normal"  textLength="16.33" lengthAdjust="spacingAndGlyphs">100</text>
<text x="349.25" y="571" font-size="11" text-anchor="middle" fill="#dcdcdc" font-weight="normal"  textLength="19.59" lengthAdjust="spacingAndGlyphs">20%</text>
<text x="419.75" y="571" font-size="11" text-anchor="middle" fill="#dcdcdc" font-weight="normal"  textLength="19.59" lengthAdjust="spacingAndGlyphs">40%</text>
<text x="490.25" y="571" font-size="11" text-anchor="middle" fill="#dcdcdc" font-weight="normal"  textLength="19.59" lengthAdjust="spacingAndGlyphs">60%</text>
<text x="560.75" y="571" font-size="11" text-anchor="middle" fill="#dcdcdc" font-weight="normal"  textLength="19.59" lengthAdjust="spacingAndGlyphs">80%</text>
<text x="631.25" y="571" font-size="11" text-anchor="middle" fill="#dcdcdc" font-weight="normal"  textLength="25.04" lengthAdjust="spacingAndGlyphs">100%</text>
<text x="447.8" y="379.7" font-size="11" text-anchor="middle" fill="#dcdcdc" font-weight="normal"  textLength="55.00" lengthAdjust="spacingAndGlyphs">DeltaE 2000</text>
<rect x="321.4" y="436.98" width="8" height="122.52" fill="#000"/>
<rect x="322.4" y="437.98" width="6" height="121.52" fill="url(#gE00)"/>
<rect x="328.98" y="401.78" width="8" height="157.72" fill="#000"/>
<rect x="329.98" y="402.78" width="6" height="156.72" fill="url(#gE01)"/>
<rect x="336.56" y="484.21" width="8" height="75.29" fill="#000"/>
<rect x="337.56" y="485.21" width="6" height="74.29" fill="url(#gE02)"/>
<rect x="344.14" y="433.17" width="8" height="126.33" fill="#000"/>
<rect x="345.14" y="434.17" width="6" height="125.33" fill="url(#gE03)"/>
<rect x="351.72" y="467.19" width="8" height="92.31" fill="#000"/>
<rect x="352.72" y="468.19" width="6" height="91.31" fill="url(#gE04)"/>
<rect x="359.3" y="393.86" width="8" height="165.64" fill="#000"/>
<rect x="360.3" y="394.86" width="6" height="164.64" fill="url(#gE05)"/>
<rect x="392" y="449.01" width="8" height="110.49" fill="#000"/>
<rect x="393" y="450.01" width="6" height="109.49" fill="url(#gE10)"/>
<rect x="399.58" y="463.09" width="8" height="96.41" fill="#000"/>
<rect x="400.58" y="464.09" width="6" height="95.41" fill="url(#gE11)"/>
<rect x="407.16" y="501.81" width="8" height="57.69" fill="#000"/>
<rect x="408.16" y="502.81" width="6" height="56.69" fill="url(#gE12)"/>
<rect x="414.74" y="433.75" width="8" height="125.75" fill="#000"/>
<rect x="415.74" y="434.75" width="6" height="124.75" fill="url(#gE13)"/>
<rect x="422.32" y="478.93" width="8" height="80.57" fill="#000"/>
<rect x="423.32" y="479.93" width="6" height="79.57" fill="url(#gE14)"/>
<rect x="429.9" y="430.23" width="8" height="129.27" fill="#000"/>
<rect x="430.9" y="431.23" width="6" height="128.27" fill="url(#gE15)"/>
<rect x="462.6" y="470.13" width="8" height="89.37" fill="#000"/>
<rect x="463.6" y="471.13" width="6" height="88.37" fill="url(#gE20)"/>
<rect x="470.18" y="500.63" width="8" height="58.87" fill="#000"/>
<rect x="471.18" y="501.63" width="6" height="57.87" fill="url(#gE21)"/>
<rect x="477.76" y="510.02" width="8" height="49.48" fill="#000"/>
<rect x="478.76" y="511.02" width="6" height="48.48" fill="url(#gE22)"/>
<rect x="485.34" y="433.75" width="8" height="125.75" fill="#000"/>
<rect x="486.34" y="434.75" width="6" height="124.75" fill="url(#gE23)"/>
<rect x="492.92" y="485.38" width="8" height="74.12" fill="#000"/>
<rect x="493.92" y="486.38" width="6" height="73.12" fill="url(#gE24)"/>
<rect x="500.5" y="482.45" width="8" height="77.05" fill="#000"/>
<rect x="501.5" y="483.45" width="6" height="76.05" fill="url(#gE25)"/>
<rect x="533.2" y="487.14" width="8" height="72.36" fill="#000"/>
<rect x="534.2" y="488.14" width="6" height="71.36" fill="url(#gE30)"/>
<rect x="540.78" y="519.99" width="8" height="39.51" fill="#000"/>
<rect x="541.78" y="520.99" width="6" height="38.51" fill="url(#gE31)"/>
<rect x="548.36" y="512.95" width="8" height="46.55" fill="#000"/>
<rect x="549.36" y="513.95" width="6" height="45.55" fill="url(#gE32)"/>
<rect x="555.94" y="433.75" width="8" height="125.75" fill="#000"/>
<rect x="556.94" y="434.75" width="6" height="124.75" fill="url(#gE33)"/>
<rect x="563.52" y="491.25" width="8" height="68.25" fill="#000"/>
<rect x="564.52" y="492.25" width="6" height="67.25" fill="url(#gE34)"/>
<rect x="571.1" y="507.67" width="8" height="51.83" fill="#000"/>
<rect x="572.1" y="508.67" width="6" height="50.83" fill="url(#gE35)"/>
<rect x="603.8" y="488.9" width="8" height="70.6" fill="#000"/>
<rect x="604.8" y="489.9" width="6" height="69.6" fill="url(#gE40)"/>
<rect x="611.38" y="526.45" width="8" height="33.05" fill="#000"/>
<rect x="612.38" y="527.45" width="6" height="32.05" fill="url(#gE41)"/>
<rect x="618.96" y="497.11" width="8" height="62.39" fill="#000"/>
<rect x="619.96" y="498.11" width="6" height="61.39" fill="url(#gE42)"/>
<rect x="626.54" y="431.99" width="8" height="127.51" fill="#000"/>
<rect x="627.54" y="432.99" width="6" height="126.51" fill="url(#gE43)"/>
<rect x="634.12" y="490.07" width="8" height="69.43" fill="#000"/>
<rect x="635.12" y="491.07" width="6" height="68.43" fill="url(#gE44)"/>
<rect x="641.7" y="522.93" width="8" height="36.57" fill="#000"/>
<rect x="642.7" y="523.93" width="6" height="35.57" fill="url(#gE45)"/>
<rect x="296.5" y="498.6" width="6.5" height="60.9" fill="#000"/>
<rect x="297.5" y="499.6" width="4.8" height="59.9" fill="url(#gEw)"/>
<rect x="244" y="500.2" width="422" height="1.9" fill="#c41c1c"/>
<rect x="244" y="541.8" width="422" height="1.4" fill="#e6e600"/>
<rect x="244" y="553" width="422" height="1.8" fill="#147814"/>
<text x="11" y="446.8" font-size="20" text-anchor="start" fill="#f0f0f0" font-weight="normal" stroke="#f0f0f0" stroke-width="0.35" textLength="152" lengthAdjust="spacingAndGlyphs">Current Reading</text>
<text x="11" y="476.6" font-size="17" text-anchor="start" fill="#f0f0f0" font-weight="normal" stroke="#f0f0f0" stroke-width="0.2" textLength="71.00" lengthAdjust="spacingAndGlyphs">x: 0,3922</text>
<text x="11" y="505.1" font-size="17" text-anchor="start" fill="#f0f0f0" font-weight="normal" stroke="#f0f0f0" stroke-width="0.2" textLength="71.50" lengthAdjust="spacingAndGlyphs">y: 0,4668</text>
<text x="11" y="533.6" font-size="17" text-anchor="start" fill="#f0f0f0" font-weight="normal" stroke="#f0f0f0" stroke-width="0.2" textLength="66.60" lengthAdjust="spacingAndGlyphs">fL: 32,53</text>
<text x="11" y="562.1" font-size="17" text-anchor="start" fill="#f0f0f0" font-weight="normal" stroke="#f0f0f0" stroke-width="0.2" textLength="120.70" lengthAdjust="spacingAndGlyphs">cd/m²: 111,455</text>
<rect x="680" y="10" width="483" height="404.5" fill="#1e1e1e"/>
<rect x="685" y="14.5" width="475" height="395" fill="#333333"/>
<rect x="705" y="31" width="453" height="358" fill="#232323"/>
<text x="922.6" y="28" font-size="11" text-anchor="middle" fill="#dcdcdc" font-weight="normal"  textLength="52.70" lengthAdjust="spacingAndGlyphs">CIE 1931 xy</text>
<g clip-path="url(#cpT)"><polygon points="799.3,386.9 799.3,386.9 799.3,386.9 799.3,386.9 799.3,386.9 799.3,386.9 799.3,386.9 799.3,386.9 799.3,386.9 799.2,386.9 799.2,386.9 799.2,386.9 799.2,386.9 799.2,386.9 799.1,386.9 799.1,386.9 799.1,386.9 799.1,386.9 799.1,386.9 799.0,386.9 799.0,386.9 799.0,386.9 799.0,387.0 798.9,387.0 798.9,387.0 798.9,387.0 798.9,387.0 798.8,387.0 798.8,387.0 798.8,387.0 798.7,387.0 798.7,387.0 798.7,387.0 798.6,387.0 798.6,387.0 798.6,387.0 798.5,387.0 798.5,387.0 798.4,387.0 798.4,387.0 798.4,387.0 798.3,387.0 798.3,387.0 798.2,387.0 798.2,386.9 798.1,386.9 798.0,386.9 798.0,386.9 797.9,386.8 797.8,386.8 797.7,386.8 797.6,386.7 797.5,386.7 797.4,386.6 797.3,386.5 797.2,386.5 797.1,386.4 796.9,386.3 796.8,386.3 796.7,386.2 796.5,386.1 796.4,386.0 796.2,385.9 796.0,385.7 795.9,385.6 795.7,385.5 795.5,385.4 795.3,385.2 795.0,385.1 794.8,384.9 794.6,384.7 794.4,384.6 794.1,384.4 793.8,384.2 793.6,384.0 793.3,383.8 793.0,383.6 792.7,383.4 792.3,383.2 792.0,382.9 791.6,382.7 791.2,382.4 790.8,382.1 790.4,381.8 789.9,381.5 789.4,381.2 789.0,380.9 788.5,380.5 788.0,380.2 787.4,379.8 786.9,379.4 786.3,379.0 785.7,378.5 785.1,378.0 784.5,377.5 783.8,377.0 783.1,376.4 782.4,375.8 781.7,375.2 781.0,374.6 780.2,373.8 779.4,373.0 778.5,372.1 777.6,371.1 776.7,370.0 775.7,368.8 774.6,367.5 773.5,366.1 772.4,364.5 771.2,362.8 770.0,361.0 768.7,359.1 767.4,357.0 766.0,354.8 764.6,352.2 763.1,349.5 761.5,346.6 759.9,343.6 758.2,340.2 756.5,336.7 754.7,332.8 752.8,328.7 750.8,324.3 748.8,319.7 746.7,314.8 744.6,309.6 742.5,304.0 740.4,298.1 738.3,291.9 736.2,285.4 734.1,278.5 731.9,271.4 729.8,264.1 727.6,256.4 725.5,248.3 723.3,239.9 721.3,231.4 719.3,222.7 717.4,214.0 715.7,205.3 714.0,196.3 712.5,187.2 711.1,178.1 709.9,169.2 708.9,160.5 708.1,151.9 707.4,143.3 706.9,134.9 706.6,126.6 706.5,118.6 706.6,110.9 707.0,103.4 707.5,96.1 708.3,89.1 709.3,82.4 710.6,76.1 712.0,70.2 713.7,64.8 715.7,59.8 717.9,55.1 720.3,50.9 722.9,47.1 725.6,43.9 728.4,41.2 731.5,39.1 734.7,37.4 738.0,36.1 741.4,35.2 744.8,34.6 748.2,34.4 751.8,34.6 755.4,35.1 759.1,35.9 762.8,36.8 766.4,37.8 770.1,38.9 773.8,40.3 777.4,41.7 781.1,43.3 784.8,44.9 788.4,46.5 791.9,48.1 795.4,49.8 798.9,51.5 802.3,53.2 805.7,55.0 809.1,56.8 812.5,58.7 815.8,60.6 819.1,62.6 822.5,64.7 825.8,66.7 829.1,68.8 832.4,70.9 835.7,73.1 838.9,75.2 842.2,77.4 845.5,79.7 848.7,81.9 852.0,84.2 855.2,86.5 858.4,88.8 861.6,91.1 864.8,93.5 868.1,95.8 871.3,98.1 874.5,100.5 877.7,102.8 880.9,105.2 884.1,107.6 887.3,110.0 890.5,112.4 893.7,114.8 897.0,117.2 900.2,119.6 903.4,122.1 906.6,124.5 909.8,127.0 913.0,129.4 916.2,131.9 919.4,134.4 922.6,136.8 925.8,139.3 929.0,141.8 932.2,144.2 935.4,146.7 938.5,149.2 941.7,151.6 944.9,154.1 948.0,156.5 951.2,159.0 954.3,161.4 957.4,163.9 960.5,166.3 963.6,168.7 966.6,171.1 969.7,173.5 972.7,175.9 975.8,178.2 978.8,180.6 981.7,182.9 984.7,185.2 987.6,187.5 990.6,189.8 993.4,192.1 996.3,194.3 999.1,196.6 1002.0,198.8 1004.7,200.9 1007.5,203.1 1010.2,205.2 1012.9,207.3 1015.5,209.4 1018.1,211.4 1020.7,213.4 1023.2,215.4 1025.7,217.3 1028.1,219.2 1030.5,221.1 1032.8,222.9 1035.0,224.6 1037.2,226.3 1039.3,228.0 1041.4,229.6 1043.5,231.2 1045.5,232.8 1047.4,234.4 1049.4,235.9 1051.3,237.4 1053.1,238.8 1054.9,240.2 1056.6,241.5 1058.3,242.8 1059.9,244.0 1061.4,245.2 1062.9,246.4 1064.4,247.6 1065.8,248.7 1067.1,249.7 1068.4,250.7 1069.7,251.7 1070.9,252.7 1072.1,253.6 1073.2,254.5 1074.3,255.3 1075.3,256.2 1076.3,256.9 1077.3,257.7 1078.2,258.4 1079.1,259.1 1080.0,259.8 1080.8,260.4 1081.6,261.1 1082.4,261.7 1083.1,262.2 1083.8,262.8 1084.5,263.3 1085.2,263.9 1085.8,264.4 1086.5,264.9 1087.1,265.3 1087.7,265.8 1088.2,266.3 1088.8,266.7 1089.3,267.1 1089.8,267.5 1090.3,267.9 1090.8,268.3 1091.3,268.7 1091.8,269.0 1092.2,269.4 1092.6,269.7 1093.0,270.0 1093.4,270.3 1093.8,270.6 1094.2,270.9 1094.5,271.2 1094.9,271.4 1095.2,271.7 1095.5,271.9 1095.8,272.2 1096.1,272.4 1096.3,272.6 1096.6,272.8 1096.8,273.0 1097.0,273.1 1097.3,273.3 1097.5,273.5 1097.7,273.6 1097.9,273.8 1098.1,273.9 1098.2,274.1 1098.4,274.2 1098.6,274.3 1098.7,274.4 1098.8,274.6 1099.0,274.7 1099.1,274.7 1099.2,274.8 1099.3,274.9 1099.4,275.0 1099.5,275.1 1099.6,275.1 1099.6,275.2 1099.7,275.2 1099.8,275.3 1099.9,275.4 1100.0,275.4 1100.0,275.5 1100.2,275.6 1100.3,275.7 1100.4,275.8 1100.5,275.9 1100.7,276.0 1100.8,276.1 1100.9,276.2 1101.1,276.3 1101.2,276.4 1101.3,276.5 1101.4,276.6 1101.5,276.6" fill="url(#gTong)"/>
<polygon points="867.2,134.9 1050.5,249.2 1160,249.2 1160,20 867.2,20" fill="url(#gOutR)"/>
<polygon points="786.4,363.6 1050.5,249.2 1160,249.2 1160,400 756.4,400" fill="url(#gOutB)"/></g>
<rect x="1030" y="32" width="128" height="130" fill="url(#gIn1)"/>
<polygon points="1030,32 1158,32 1158,147.3 1030,46.2" fill="url(#gIn2)"/>
<polygon points="1141,32 1158,32 1158,50" fill="#232323"/>
<g style="isolation:isolate"><polygon points="1050.5,249.2 867.2,134.9 786.4,363.6" fill="#000"/>
<polygon style="mix-blend-mode:screen" points="1050.5,249.2 867.2,134.9 786.4,363.6" fill="url(#gV0)"/>
<polygon style="mix-blend-mode:screen" points="1050.5,249.2 867.2,134.9 786.4,363.6" fill="url(#gV1)"/>
<polygon style="mix-blend-mode:screen" points="1050.5,249.2 867.2,134.9 786.4,363.6" fill="url(#gV2)"/>
<polygon style="mix-blend-mode:screen" points="1050.5,249.2 867.2,134.9 786.4,363.6" fill="url(#gW)"/></g>
<rect x="701" y="389" width="4.5" height="1" fill="#a6a6a6"/>
<text x="700.5" y="393.5" font-size="11" text-anchor="end" fill="#dcdcdc" font-weight="normal"  textLength="5.44" lengthAdjust="spacingAndGlyphs">0</text>
<rect x="706" y="389" width="1" height="4" fill="#a6a6a6"/>
<text x="706.5" y="405" font-size="11" text-anchor="middle" fill="#dcdcdc" font-weight="normal"  textLength="5.44" lengthAdjust="spacingAndGlyphs">0</text>
<rect x="701" y="347" width="4.5" height="1" fill="#a6a6a6"/>
<text x="700.5" y="351.5" font-size="11" text-anchor="end" fill="#dcdcdc" font-weight="normal"  textLength="13.61" lengthAdjust="spacingAndGlyphs">0,1</text>
<rect x="759" y="389" width="1" height="4" fill="#a6a6a6"/>
<text x="759.5" y="405" font-size="11" text-anchor="middle" fill="#dcdcdc" font-weight="normal"  textLength="13.61" lengthAdjust="spacingAndGlyphs">0,1</text>
<rect x="701" y="304" width="4.5" height="1" fill="#a6a6a6"/>
<text x="700.5" y="308.5" font-size="11" text-anchor="end" fill="#dcdcdc" font-weight="normal"  textLength="13.61" lengthAdjust="spacingAndGlyphs">0,2</text>
<rect x="813" y="389" width="1" height="4" fill="#a6a6a6"/>
<text x="813.5" y="405" font-size="11" text-anchor="middle" fill="#dcdcdc" font-weight="normal"  textLength="13.61" lengthAdjust="spacingAndGlyphs">0,2</text>
<rect x="701" y="262" width="4.5" height="1" fill="#a6a6a6"/>
<text x="700.5" y="266.5" font-size="11" text-anchor="end" fill="#dcdcdc" font-weight="normal"  textLength="13.61" lengthAdjust="spacingAndGlyphs">0,3</text>
<rect x="867" y="389" width="1" height="4" fill="#a6a6a6"/>
<text x="867.5" y="405" font-size="11" text-anchor="middle" fill="#dcdcdc" font-weight="normal"  textLength="13.61" lengthAdjust="spacingAndGlyphs">0,3</text>
<rect x="701" y="220" width="4.5" height="1" fill="#a6a6a6"/>
<text x="700.5" y="224.5" font-size="11" text-anchor="end" fill="#dcdcdc" font-weight="normal"  textLength="13.61" lengthAdjust="spacingAndGlyphs">0,4</text>
<rect x="921" y="389" width="1" height="4" fill="#a6a6a6"/>
<text x="921.5" y="405" font-size="11" text-anchor="middle" fill="#dcdcdc" font-weight="normal"  textLength="13.61" lengthAdjust="spacingAndGlyphs">0,4</text>
<rect x="701" y="177" width="4.5" height="1" fill="#a6a6a6"/>
<text x="700.5" y="181.5" font-size="11" text-anchor="end" fill="#dcdcdc" font-weight="normal"  textLength="13.61" lengthAdjust="spacingAndGlyphs">0,5</text>
<rect x="975" y="389" width="1" height="4" fill="#a6a6a6"/>
<text x="975.5" y="405" font-size="11" text-anchor="middle" fill="#dcdcdc" font-weight="normal"  textLength="13.61" lengthAdjust="spacingAndGlyphs">0,5</text>
<rect x="701" y="135" width="4.5" height="1" fill="#a6a6a6"/>
<text x="700.5" y="139.5" font-size="11" text-anchor="end" fill="#dcdcdc" font-weight="normal"  textLength="13.61" lengthAdjust="spacingAndGlyphs">0,6</text>
<rect x="1029" y="389" width="1" height="4" fill="#a6a6a6"/>
<text x="1029.5" y="405" font-size="11" text-anchor="middle" fill="#dcdcdc" font-weight="normal"  textLength="13.61" lengthAdjust="spacingAndGlyphs">0,6</text>
<rect x="701" y="93" width="4.5" height="1" fill="#a6a6a6"/>
<text x="700.5" y="97.5" font-size="11" text-anchor="end" fill="#dcdcdc" font-weight="normal"  textLength="13.61" lengthAdjust="spacingAndGlyphs">0,7</text>
<rect x="1083" y="389" width="1" height="4" fill="#a6a6a6"/>
<text x="1083.5" y="405" font-size="11" text-anchor="middle" fill="#dcdcdc" font-weight="normal"  textLength="13.61" lengthAdjust="spacingAndGlyphs">0,7</text>
<rect x="701" y="50" width="4.5" height="1" fill="#a6a6a6"/>
<text x="700.5" y="54.5" font-size="11" text-anchor="end" fill="#dcdcdc" font-weight="normal"  textLength="13.61" lengthAdjust="spacingAndGlyphs">0,8</text>
<rect x="1137" y="389" width="1" height="4" fill="#a6a6a6"/>
<text x="1137.5" y="405" font-size="11" text-anchor="middle" fill="#dcdcdc" font-weight="normal"  textLength="13.61" lengthAdjust="spacingAndGlyphs">0,8</text>
</svg>
<canvas id="cie" width="1166" height="577"></canvas>
<svg width="1166" height="577" viewBox="0 0 1166 577">
<rect x="705.5" y="31.5" width="452" height="358" fill="none" stroke="#a6a6a6" stroke-width="1"/>
<rect x="903.0" y="244.5" width="9.6" height="9.6" fill="none" stroke="#ffffff" stroke-width="1.2"/>
<rect x="939.1" y="243.7" width="9.6" height="9.6" fill="none" stroke="#ffffff" stroke-width="1.2"/>
<rect x="971.6" y="243.7" width="9.6" height="9.6" fill="none" stroke="#ffffff" stroke-width="1.2"/>
<rect x="1006.1" y="243.7" width="9.6" height="9.6" fill="none" stroke="#ffffff" stroke-width="1.2"/>
<rect x="1044.6" y="243.7" width="9.6" height="9.6" fill="none" stroke="#ffffff" stroke-width="1.2"/>
<rect x="867.2" y="220.9" width="9.6" height="9.6" fill="none" stroke="#ffffff" stroke-width="1.2"/>
<rect x="865.9" y="198.0" width="9.6" height="9.6" fill="none" stroke="#ffffff" stroke-width="1.2"/>
<rect x="864.1" y="176.1" width="9.6" height="9.6" fill="none" stroke="#ffffff" stroke-width="1.2"/>
<rect x="863.0" y="154.1" width="9.6" height="9.6" fill="none" stroke="#ffffff" stroke-width="1.2"/>
<rect x="861.4" y="129.1" width="9.6" height="9.6" fill="none" stroke="#ffffff" stroke-width="1.2"/>
<rect x="851.0" y="267.8" width="9.6" height="9.6" fill="none" stroke="#ffffff" stroke-width="1.2"/>
<rect x="834.3" y="289.7" width="9.6" height="9.6" fill="none" stroke="#ffffff" stroke-width="1.2"/>
<rect x="816.6" y="311.5" width="9.6" height="9.6" fill="none" stroke="#ffffff" stroke-width="1.2"/>
<rect x="799.5" y="333.7" width="9.6" height="9.6" fill="none" stroke="#ffffff" stroke-width="1.2"/>
<rect x="780.6" y="358.4" width="9.6" height="9.6" fill="none" stroke="#ffffff" stroke-width="1.2"/>
<rect x="859.3" y="244.5" width="9.6" height="9.6" fill="none" stroke="#ffffff" stroke-width="1.2"/>
<rect x="849.9" y="244.5" width="9.6" height="9.6" fill="none" stroke="#ffffff" stroke-width="1.2"/>
<rect x="840.6" y="244.5" width="9.6" height="9.6" fill="none" stroke="#ffffff" stroke-width="1.2"/>
<rect x="831.2" y="244.5" width="9.6" height="9.6" fill="none" stroke="#ffffff" stroke-width="1.2"/>
<rect x="821.4" y="244.5" width="9.6" height="9.6" fill="none" stroke="#ffffff" stroke-width="1.2"/>
<rect x="870.1" y="258.5" width="9.6" height="9.6" fill="none" stroke="#ffffff" stroke-width="1.2"/>
<rect x="870.9" y="274.1" width="9.6" height="9.6" fill="none" stroke="#ffffff" stroke-width="1.2"/>
<rect x="870.9" y="287.6" width="9.6" height="9.6" fill="none" stroke="#ffffff" stroke-width="1.2"/>
<rect x="872.0" y="303.2" width="9.6" height="9.6" fill="none" stroke="#ffffff" stroke-width="1.2"/>
<rect x="872.4" y="318.6" width="9.6" height="9.6" fill="none" stroke="#ffffff" stroke-width="1.2"/>
<rect x="881.1" y="229.4" width="9.6" height="9.6" fill="none" stroke="#ffffff" stroke-width="1.2"/>
<rect x="891.5" y="213.6" width="9.6" height="9.6" fill="none" stroke="#ffffff" stroke-width="1.2"/>
<rect x="903.0" y="198.0" width="9.6" height="9.6" fill="none" stroke="#ffffff" stroke-width="1.2"/>
<rect x="913.4" y="184.5" width="9.6" height="9.6" fill="none" stroke="#ffffff" stroke-width="1.2"/>
<rect x="926.1" y="169.7" width="9.6" height="9.6" fill="none" stroke="#ffffff" stroke-width="1.2"/>
<rect x="869.3" y="244.5" width="9.6" height="9.6" fill="none" stroke="#000000" stroke-width="1.4"/>
<circle cx="877.4" cy="160.1" r="3.05" fill="#14b014" stroke="#111" stroke-width="1.1"/>
<circle cx="868.9" cy="190.3" r="3.05" fill="#58a450" stroke="#111" stroke-width="1.1"/>
<circle cx="860.6" cy="218.2" r="3.05" fill="#60a860" stroke="#111" stroke-width="1.1"/>
<circle cx="854.9" cy="242.5" r="3.05" fill="#70a868" stroke="#111" stroke-width="1.1"/>
<circle cx="849.5" cy="264.3" r="3.05" fill="#90b080" stroke="#111" stroke-width="1.1"/>
<circle cx="856.4" cy="268.5" r="3.05" fill="#b8b890" stroke="#111" stroke-width="1.1"/>
<circle cx="869.7" cy="252.3" r="3.05" fill="#b0b070" stroke="#111" stroke-width="1.1"/>
<circle cx="883.4" cy="233.8" r="3.05" fill="#b0a860" stroke="#111" stroke-width="1.1"/>
<circle cx="898.2" cy="214.4" r="3.05" fill="#b8b048" stroke="#111" stroke-width="1.1"/>
<circle cx="916.1" cy="190.3" r="3.05" fill="#c0b428" stroke="#111" stroke-width="1.1"/>
<circle cx="866.2" cy="282" r="3.05" fill="#c08070" stroke="#111" stroke-width="1.1"/>
<circle cx="892.8" cy="277.4" r="3.05" fill="#c06868" stroke="#111" stroke-width="1.1"/>
<circle cx="921.3" cy="270.6" r="3.05" fill="#c05858" stroke="#111" stroke-width="1.1"/>
<circle cx="955.5" cy="262.4" r="3.05" fill="#c04040" stroke="#111" stroke-width="1.1"/>
<circle cx="991.3" cy="252.8" r="3.05" fill="#c00808" stroke="#111" stroke-width="1.1"/>
<circle cx="840.6" cy="281.8" r="3.05" fill="#a0c0b0" stroke="#111" stroke-width="1.1"/>
<circle cx="835" cy="283" r="3.05" fill="#90c0b8" stroke="#111" stroke-width="1.1"/>
<circle cx="829.8" cy="284.1" r="3.05" fill="#70c0b8" stroke="#111" stroke-width="1.1"/>
<circle cx="825.6" cy="284.5" r="3.05" fill="#50b8b0" stroke="#111" stroke-width="1.1"/>
<circle cx="820.4" cy="285.5" r="3.05" fill="#20b8b0" stroke="#111" stroke-width="1.1"/>
<circle cx="843.2" cy="293.5" r="3.05" fill="#d0b0c0" stroke="#111" stroke-width="1.1"/>
<circle cx="830.4" cy="302.4" r="3.05" fill="#a0a0c0" stroke="#111" stroke-width="1.1"/>
<circle cx="815.8" cy="319.4" r="3.05" fill="#9090c0" stroke="#111" stroke-width="1.1"/>
<circle cx="805.3" cy="333.9" r="3.05" fill="#6060b0" stroke="#111" stroke-width="1.1"/>
<circle cx="797" cy="345.5" r="3.05" fill="#4848a8" stroke="#111" stroke-width="1.1"/>
<circle cx="789.1" cy="354.9" r="3.05" fill="#2020a0" stroke="#111" stroke-width="1.1"/>
<circle cx="840.5" cy="306" r="3.05" fill="#d0a0c0" stroke="#111" stroke-width="1.1"/>
<circle cx="837.4" cy="314.5" r="3.05" fill="#c888c8" stroke="#111" stroke-width="1.1"/>
<circle cx="836" cy="325.4" r="3.05" fill="#c058c0" stroke="#111" stroke-width="1.1"/>
<circle cx="832.8" cy="333" r="3.05" fill="#c010b0" stroke="#111" stroke-width="1.1"/>
<circle cx="868.2" cy="257.7" r="3.05" fill="#ffffff" stroke="#111" stroke-width="1.1"/>
<rect x="1029.5" y="32" width="128.5" height="130" fill="none" stroke="#a0a0a0" stroke-width="1"/>
<rect x="1088" y="91.4" width="9.7" height="10" fill="none" stroke="#fff" stroke-width="1.5"/>
<rect x="1055.2" y="147.3" width="9.7" height="10" fill="none" stroke="#fff" stroke-width="1.5"/>
<circle cx="1053" cy="154.4" r="3.6" fill="#a0a030" stroke="#1a1a1a" stroke-width="1"/>
<rect x="682" y="420" width="356.5" height="22" fill="url(#gHdr)"/>
<rect x="682" y="419.8" width="11" height="22.2" fill="#000"/>
<text x="793.9" y="436.2" font-size="12.5" text-anchor="start" fill="#ffffff" font-weight="normal" stroke="#ffffff" stroke-width="0.55" textLength="25.77" lengthAdjust="spacingAndGlyphs">20%</text>
<text x="843.4" y="436.2" font-size="12.5" text-anchor="start" fill="#ffffff" font-weight="normal" stroke="#ffffff" stroke-width="0.55" textLength="25.77" lengthAdjust="spacingAndGlyphs">40%</text>
<text x="893.1" y="436.2" font-size="12.5" text-anchor="start" fill="#ffffff" font-weight="normal" stroke="#ffffff" stroke-width="0.55" textLength="25.77" lengthAdjust="spacingAndGlyphs">60%</text>
<text x="942.8" y="436.2" font-size="12.5" text-anchor="start" fill="#ffffff" font-weight="normal" stroke="#ffffff" stroke-width="0.55" textLength="25.77" lengthAdjust="spacingAndGlyphs">80%</text>
<text x="992.9" y="436.2" font-size="12.5" text-anchor="start" fill="#ffffff" font-weight="normal" stroke="#ffffff" stroke-width="0.55" textLength="32.93" lengthAdjust="spacingAndGlyphs">100%</text>
<rect x="682" y="442" width="356.5" height="20.1" fill="#3c3c3c"/>
<rect x="682" y="442" width="11" height="20.1" fill="#2c2c2c" stroke="#262626" stroke-width="0.6"/>
<text x="697.4" y="457" font-size="13" text-anchor="start" fill="#ffffff" font-weight="normal" >x: CIE31</text>
<text x="793.9" y="457" font-size="13" text-anchor="start" fill="#ffffff" font-weight="normal" >0,28</text>
<text x="843.4" y="457" font-size="13" text-anchor="start" fill="#ffffff" font-weight="normal" >0,31</text>
<text x="893.1" y="457" font-size="13" text-anchor="start" fill="#ffffff" font-weight="normal" >0,33</text>
<text x="942.8" y="457" font-size="13" text-anchor="start" fill="#ffffff" font-weight="normal" >0,36</text>
<text x="992.9" y="457" font-size="13" text-anchor="start" fill="#ffffff" font-weight="normal" >0,39</text>
<rect x="682" y="462.1" width="356.5" height="20.1" fill="#8a8a8a"/>
<rect x="682" y="462.1" width="11" height="20.1" fill="#2c2c2c" stroke="#262626" stroke-width="0.6"/>
<text x="697.4" y="477.1" font-size="13" text-anchor="start" fill="#ffffff" font-weight="normal" >y: CIE31</text>
<text x="793.9" y="477.1" font-size="13" text-anchor="start" fill="#ffffff" font-weight="normal" >0,28</text>
<text x="843.4" y="477.1" font-size="13" text-anchor="start" fill="#ffffff" font-weight="normal" >0,32</text>
<text x="893.1" y="477.1" font-size="13" text-anchor="start" fill="#ffffff" font-weight="normal" >0,36</text>
<text x="942.8" y="477.1" font-size="13" text-anchor="start" fill="#ffffff" font-weight="normal" >0,41</text>
<text x="992.9" y="477.1" font-size="13" text-anchor="start" fill="#ffffff" font-weight="normal" >0,47</text>
<rect x="682" y="482.20000000000005" width="356.5" height="20.1" fill="#3c3c3c"/>
<rect x="682" y="482.20000000000005" width="11" height="20.1" fill="#2c2c2c" stroke="#262626" stroke-width="0.6"/>
<text x="697.4" y="497.2" font-size="13" text-anchor="start" fill="#ffffff" font-weight="normal" >Y</text>
<text x="793.9" y="497.2" font-size="13" text-anchor="start" fill="#ffffff" font-weight="normal" >131,69</text>
<text x="843.4" y="497.2" font-size="13" text-anchor="start" fill="#ffffff" font-weight="normal" >125,34</text>
<text x="893.1" y="497.2" font-size="13" text-anchor="start" fill="#ffffff" font-weight="normal" >120,81</text>
<text x="942.8" y="497.2" font-size="13" text-anchor="start" fill="#ffffff" font-weight="normal" >116,99</text>
<text x="992.9" y="497.2" font-size="13" text-anchor="start" fill="#ffffff" font-weight="normal" >111,45</text>
<rect x="682" y="502.30000000000007" width="356.5" height="20.1" fill="#8a8a8a"/>
<rect x="682" y="502.30000000000007" width="11" height="20.1" fill="#2c2c2c" stroke="#262626" stroke-width="0.6"/>
<text x="697.4" y="517.3" font-size="13" text-anchor="start" fill="#ffffff" font-weight="normal" >Target x:CIE31</text>
<text x="793.9" y="517.3" font-size="13" text-anchor="start" fill="#ffffff" font-weight="normal" >0,33</text>
<text x="843.4" y="517.3" font-size="13" text-anchor="start" fill="#ffffff" font-weight="normal" >0,36</text>
<text x="893.1" y="517.3" font-size="13" text-anchor="start" fill="#ffffff" font-weight="normal" >0,38</text>
<text x="942.8" y="517.3" font-size="13" text-anchor="start" fill="#ffffff" font-weight="normal" >0,40</text>
<text x="992.9" y="517.3" font-size="13" text-anchor="start" fill="#ffffff" font-weight="normal" >0,42</text>
<rect x="682" y="522.4000000000001" width="356.5" height="20.1" fill="#3c3c3c"/>
<rect x="682" y="522.4000000000001" width="11" height="20.1" fill="#2c2c2c" stroke="#262626" stroke-width="0.6"/>
<text x="697.4" y="537.4" font-size="13" text-anchor="start" fill="#ffffff" font-weight="normal" >Target y:CIE31</text>
<text x="793.9" y="537.4" font-size="13" text-anchor="start" fill="#ffffff" font-weight="normal" >0,36</text>
<text x="843.4" y="537.4" font-size="13" text-anchor="start" fill="#ffffff" font-weight="normal" >0,40</text>
<text x="893.1" y="537.4" font-size="13" text-anchor="start" fill="#ffffff" font-weight="normal" >0,44</text>
<text x="942.8" y="537.4" font-size="13" text-anchor="start" fill="#ffffff" font-weight="normal" >0,47</text>
<text x="992.9" y="537.4" font-size="13" text-anchor="start" fill="#ffffff" font-weight="normal" >0,51</text>
<rect x="682" y="542.5000000000001" width="356.5" height="20.1" fill="#8a8a8a"/>
<rect x="682" y="542.5000000000001" width="11" height="20.1" fill="#2c2c2c" stroke="#262626" stroke-width="0.6"/>
<text x="697.4" y="557.5" font-size="13" text-anchor="start" fill="#ffffff" font-weight="normal" >Target Y</text>
<text x="793.9" y="557.5" font-size="13" text-anchor="start" fill="#ffffff" font-weight="normal" >127,84</text>
<text x="843.4" y="557.5" font-size="13" text-anchor="start" fill="#ffffff" font-weight="normal" >125,60</text>
<text x="893.1" y="557.5" font-size="13" text-anchor="start" fill="#ffffff" font-weight="normal" >123,87</text>
<text x="942.8" y="557.5" font-size="13" text-anchor="start" fill="#ffffff" font-weight="normal" >122,52</text>
<text x="992.9" y="557.5" font-size="13" text-anchor="start" fill="#ffffff" font-weight="normal" >121,21</text>
</svg>
</div>
<script>
(function(){
var LOC=[[0.17410,0.00500],[0.17409,0.00500],[0.17408,0.00500],[0.17406,0.00501],[0.17404,0.00501],[0.17402,0.00501],[0.17400,0.00500],[0.17397,0.00499],[0.17394,0.00497],[0.17391,0.00495],[0.17387,0.00493],[0.17383,0.00491],[0.17380,0.00490],[0.17377,0.00490],[0.17374,0.00490],[0.17371,0.00490],[0.17367,0.00490],[0.17364,0.00490],[0.17360,0.00490],[0.17356,0.00489],[0.17351,0.00487],[0.17346,0.00485],[0.17340,0.00483],[0.17335,0.00481],[0.17330,0.00480],[0.17325,0.00479],[0.17320,0.00479],[0.17316,0.00479],[0.17311,0.00480],[0.17306,0.00480],[0.17300,0.00480],[0.17294,0.00480],[0.17288,0.00480],[0.17281,0.00480],[0.17274,0.00480],[0.17267,0.00480],[0.17260,0.00480],[0.17252,0.00480],[0.17245,0.00479],[0.17237,0.00478],[0.17229,0.00478],[0.17220,0.00478],[0.17210,0.00480],[0.17200,0.00483],[0.17190,0.00486],[0.17179,0.00491],[0.17167,0.00496],[0.17154,0.00502],[0.17140,0.00510],[0.17124,0.00519],[0.17107,0.00529],[0.17089,0.00540],[0.17070,0.00552],[0.17051,0.00566],[0.17030,0.00580],[0.17009,0.00595],[0.16988,0.00611],[0.16966,0.00629],[0.16942,0.00647],[0.16917,0.00668],[0.16890,0.00690],[0.16861,0.00714],[0.16830,0.00740],[0.16797,0.00767],[0.16763,0.00797],[0.16727,0.00827],[0.16690,0.00860],[0.16652,0.00894],[0.16613,0.00930],[0.16573,0.00967],[0.16531,0.01007],[0.16487,0.01048],[0.16440,0.01090],[0.16391,0.01134],[0.16340,0.01179],[0.16287,0.01225],[0.16232,0.01274],[0.16173,0.01325],[0.16110,0.01380],[0.16043,0.01438],[0.15973,0.01499],[0.15899,0.01562],[0.15823,0.01628],[0.15743,0.01697],[0.15660,0.01770],[0.15575,0.01845],[0.15487,0.01921],[0.15396,0.02001],[0.15301,0.02084],[0.15203,0.02174],[0.15100,0.02270],[0.14993,0.02371],[0.14883,0.02477],[0.14768,0.02587],[0.14650,0.02706],[0.14527,0.02832],[0.14400,0.02970],[0.14270,0.03113],[0.14139,0.03258],[0.14002,0.03412],[0.13860,0.03581],[0.13710,0.03772],[0.13550,0.03990],[0.13380,0.04231],[0.13203,0.04489],[0.13018,0.04767],[0.12824,0.05073],[0.12621,0.05409],[0.12410,0.05780],[0.12191,0.06180],[0.11964,0.06602],[0.11728,0.07055],[0.11483,0.07547],[0.11227,0.08086],[0.10960,0.08680],[0.10682,0.09322],[0.10394,0.10003],[0.10096,0.10731],[0.09786,0.11514],[0.09464,0.12358],[0.09130,0.13270],[0.08779,0.14245],[0.08411,0.15276],[0.08031,0.16367],[0.07644,0.17527],[0.07256,0.18759],[0.06870,0.20070],[0.06484,0.21462],[0.06093,0.22932],[0.05701,0.24474],[0.05300,0.26084],[0.04899,0.27758],[0.04504,0.29495],[0.04108,0.31314],[0.03707,0.33221],[0.03310,0.35196],[0.02923,0.37216],[0.02553,0.39262],[0.02209,0.41311],[0.01883,0.43387],[0.01573,0.45510],[0.01296,0.47651],[0.01044,0.49790],[0.00822,0.51903],[0.00637,0.53966],[0.00485,0.55996],[0.00358,0.58016],[0.00262,0.60011],[0.00201,0.61963],[0.00181,0.63857],[0.00205,0.65675],[0.00272,0.67436],[0.00378,0.69156],[0.00523,0.70817],[0.00710,0.72402],[0.00939,0.73893],[0.01211,0.75273],[0.01530,0.76551],[0.01899,0.77744],[0.02309,0.78844],[0.02754,0.79841],[0.03229,0.80726],[0.03726,0.81490],[0.04253,0.82122],[0.04819,0.82628],[0.05413,0.83023],[0.06028,0.83320],[0.06655,0.83535],[0.07287,0.83683],[0.07929,0.83741],[0.08589,0.83694],[0.09262,0.83565],[0.09942,0.83377],[0.10623,0.83154],[0.11301,0.82918],[0.11979,0.82657],[0.12663,0.82347],[0.13349,0.82002],[0.14032,0.81634],[0.14709,0.81255],[0.15375,0.80876],[0.16031,0.80495],[0.16679,0.80102],[0.17321,0.79698],[0.17957,0.79284],[0.18589,0.78861],[0.19218,0.78432],[0.19843,0.77994],[0.20465,0.77535],[0.21084,0.77064],[0.21699,0.76586],[0.22312,0.76101],[0.22925,0.75610],[0.23537,0.75110],[0.24147,0.74603],[0.24755,0.74088],[0.25362,0.73567],[0.25967,0.73041],[0.26570,0.72511],[0.27172,0.71976],[0.27772,0.71435],[0.28370,0.70888],[0.28967,0.70338],[0.29564,0.69783],[0.30160,0.69230],[0.30755,0.68683],[0.31350,0.68131],[0.31945,0.67575],[0.32540,0.67016],[0.33135,0.66454],[0.33730,0.65890],[0.34326,0.65323],[0.34923,0.64753],[0.35521,0.64179],[0.36118,0.63604],[0.36714,0.63027],[0.37310,0.62450],[0.37905,0.61871],[0.38499,0.61290],[0.39093,0.60708],[0.39686,0.60125],[0.40278,0.59542],[0.40870,0.58960],[0.41462,0.58378],[0.42054,0.57795],[0.42646,0.57212],[0.43236,0.56630],[0.43824,0.56049],[0.44410,0.55470],[0.44994,0.54892],[0.45576,0.54314],[0.46156,0.53737],[0.46733,0.53162],[0.47308,0.52589],[0.47880,0.52020],[0.48449,0.51453],[0.49016,0.50888],[0.49580,0.50326],[0.50141,0.49766],[0.50698,0.49211],[0.51250,0.48660],[0.51799,0.48113],[0.52344,0.47569],[0.52886,0.47029],[0.53423,0.46493],[0.53954,0.45963],[0.54480,0.45440],[0.55001,0.44922],[0.55517,0.44409],[0.56029,0.43902],[0.56534,0.43401],[0.57031,0.42907],[0.57520,0.42420],[0.58001,0.41940],[0.58477,0.41464],[0.58944,0.40996],[0.59403,0.40537],[0.59852,0.40087],[0.60290,0.39650],[0.60716,0.39225],[0.61131,0.38812],[0.61536,0.38409],[0.61931,0.38015],[0.62319,0.37629],[0.62700,0.37250],[0.63074,0.36877],[0.63441,0.36511],[0.63801,0.36154],[0.64151,0.35805],[0.64491,0.35467],[0.64820,0.35140],[0.65138,0.34825],[0.65446,0.34521],[0.65743,0.34227],[0.66031,0.33943],[0.66310,0.33668],[0.66580,0.33400],[0.66841,0.33140],[0.67092,0.32890],[0.67334,0.32648],[0.67567,0.32414],[0.67792,0.32188],[0.68010,0.31970],[0.68219,0.31760],[0.68420,0.31560],[0.68613,0.31367],[0.68798,0.31181],[0.68977,0.31003],[0.69150,0.30830],[0.69317,0.30664],[0.69477,0.30506],[0.69631,0.30354],[0.69779,0.30209],[0.69921,0.30067],[0.70060,0.29930],[0.70193,0.29797],[0.70321,0.29670],[0.70444,0.29547],[0.70562,0.29428],[0.70677,0.29313],[0.70790,0.29200],[0.70900,0.29090],[0.71006,0.28984],[0.71109,0.28881],[0.71209,0.28781],[0.71306,0.28684],[0.71400,0.28590],[0.71491,0.28499],[0.71579,0.28411],[0.71663,0.28326],[0.71745,0.28244],[0.71824,0.28166],[0.71900,0.28090],[0.71974,0.28018],[0.72044,0.27949],[0.72113,0.27882],[0.72178,0.27819],[0.72240,0.27759],[0.72300,0.27700],[0.72357,0.27644],[0.72410,0.27591],[0.72461,0.27540],[0.72509,0.27491],[0.72555,0.27445],[0.72600,0.27400],[0.72643,0.27357],[0.72684,0.27316],[0.72723,0.27277],[0.72760,0.27240],[0.72796,0.27204],[0.72830,0.27170],[0.72862,0.27137],[0.72893,0.27107],[0.72923,0.27077],[0.72950,0.27050],[0.72976,0.27024],[0.73000,0.27000],[0.73022,0.26978],[0.73042,0.26958],[0.73060,0.26940],[0.73077,0.26923],[0.73094,0.26906],[0.73110,0.26890],[0.73126,0.26874],[0.73140,0.26860],[0.73153,0.26847],[0.73167,0.26833],[0.73182,0.26818],[0.73200,0.26800],[0.73221,0.26779],[0.73243,0.26757],[0.73267,0.26733],[0.73292,0.26708],[0.73317,0.26683],[0.73340,0.26660],[0.73364,0.26636],[0.73389,0.26611],[0.73414,0.26586],[0.73437,0.26563],[0.73456,0.26544],[0.73470,0.26530]];
var cv=document.getElementById('cie');
if(!cv||!cv.getContext)return;
var ctx=cv.getContext('2d');
var WX=0.3127,WY=0.3290;
var V=[[0.64,0.33,[1,0,0]],[0.30,0.60,[0,1,0]],[0.15,0.06,[0,0,1]]];
var DARK=0.6, K=2.7;
function rgbxy(x,y,o,gam){
  var X=x/y,Z=(1-x-y)/y;
  var r=3.2406*X-1.5372-0.4986*Z, g=-0.9689*X+1.8758+0.0415*Z, b=0.0557*X-0.2040+1.0570*Z;
  if(r<0)r=0;if(g<0)g=0;if(b<0)b=0;
  var m=Math.max(r,g,b);r/=m;g/=m;b/=m;
  o[0]=Math.pow(r,gam);o[1]=Math.pow(g,gam);o[2]=Math.pow(b,gam);
}
var GAM=1;var HPROJ=true;
function col(x,y,o){
  var dx=x-WX,dy=y-WY,best=1e9;
  for(var i=0;i<3;i++){
    var p=V[i],q=V[(i+1)%3];
    var ex=q[0]-p[0],ey=q[1]-p[1];
    var den=dx*ey-dy*ex; if(Math.abs(den)<1e-12)continue;
    var wx=p[0]-WX,wy=p[1]-WY;
    var t=(wx*ey-wy*ex)/den, s=(wx*dy-wy*dx)/den;
    if(t>0&&s>=-1e-9&&s<=1+1e-9&&t<best){best=t;}
  }
  if(best>1e8){o[0]=o[1]=o[2]=255;return;}
  if(best>=1){rgbxy(x,y,o,GAM);o[0]*=255;o[1]*=255;o[2]*=255;}
  else{
    var qx=WX+best*dx,qy=WY+best*dy;
    // left side: horizontal projection onto G-B edge
    var gbx=0.15+(Math.min(Math.max(y,0.06),0.60)-0.06)/0.54*0.15;
    if(HPROJ&&x<gbx&&y>0.06){var yy=Math.min(y,0.60);qx=0.15+(yy-0.06)/0.54*0.15;qy=yy;}
    rgbxy(qx,qy,o,GAM);o[0]*=255*DARK;o[1]*=255*DARK;o[2]*=255*DARK;}
}
function render(x0,y0,w,h,mapx,mapy){
  var oc=document.createElement('canvas');oc.width=w;oc.height=h;
  var oc2=oc.getContext('2d');var im=oc2.createImageData(w,h);var d=im.data;var o=[0,0,0];
  for(var j=0;j<h;j++)for(var i=0;i<w;i++){
    var r=0,g=0,b=0;
    for(var sj=0;sj<2;sj++)for(var si=0;si<2;si++){
      col(mapx(x0+i+0.25+0.5*si),mapy(y0+j+0.25+0.5*sj),o);r+=o[0];g+=o[1];b+=o[2];}
    var k=(j*w+i)*4;d[k]=r/4;d[k+1]=g/4;d[k+2]=b/4;d[k+3]=255;
  }
  oc2.putImageData(im,0,0);return oc;
}
// main plot
var X0=705.5,Y0=389,KX=539,KY=423.5;
var px0=706,py0=32,pw=1158-706,ph=389-32;
var img=render(px0,py0,pw,ph,function(px){return (px-X0)/KX;},function(py){return (Y0-py)/KY;});
ctx.save();ctx.beginPath();
for(var i=0;i<LOC.length;i++){var sx=X0+KX*LOC[i][0],sy=Y0-KY*LOC[i][1];if(i==0)ctx.moveTo(sx,sy);else ctx.lineTo(sx,sy);}
ctx.closePath();ctx.clip();ctx.drawImage(img,px0,py0);ctx.restore();
// inset
var IX=1092.8,IY=96.4,IK=1490;
var ix0=1030,iy0=32,iw=128,ih=130;
ctx.fillStyle='#232323';ctx.fillRect(ix0,iy0,iw,ih);
var img2=render(ix0,iy0,iw,ih,function(px){return 0.4193+(px-IX)/IK;},function(py){return 0.5053-(py-IY)/IK;});
ctx.save();ctx.beginPath();ctx.rect(ix0,iy0,iw,ih);ctx.clip();
ctx.beginPath();
for(var i=0;i<LOC.length;i++){var sx=IX+(LOC[i][0]-0.4193)*IK,sy=IY-(LOC[i][1]-0.5053)*IK;if(i==0)ctx.moveTo(sx,sy);else ctx.lineTo(sx,sy);}
ctx.closePath();ctx.clip();ctx.drawImage(img2,ix0,iy0);ctx.restore();
})();

</script>
</body></html>
